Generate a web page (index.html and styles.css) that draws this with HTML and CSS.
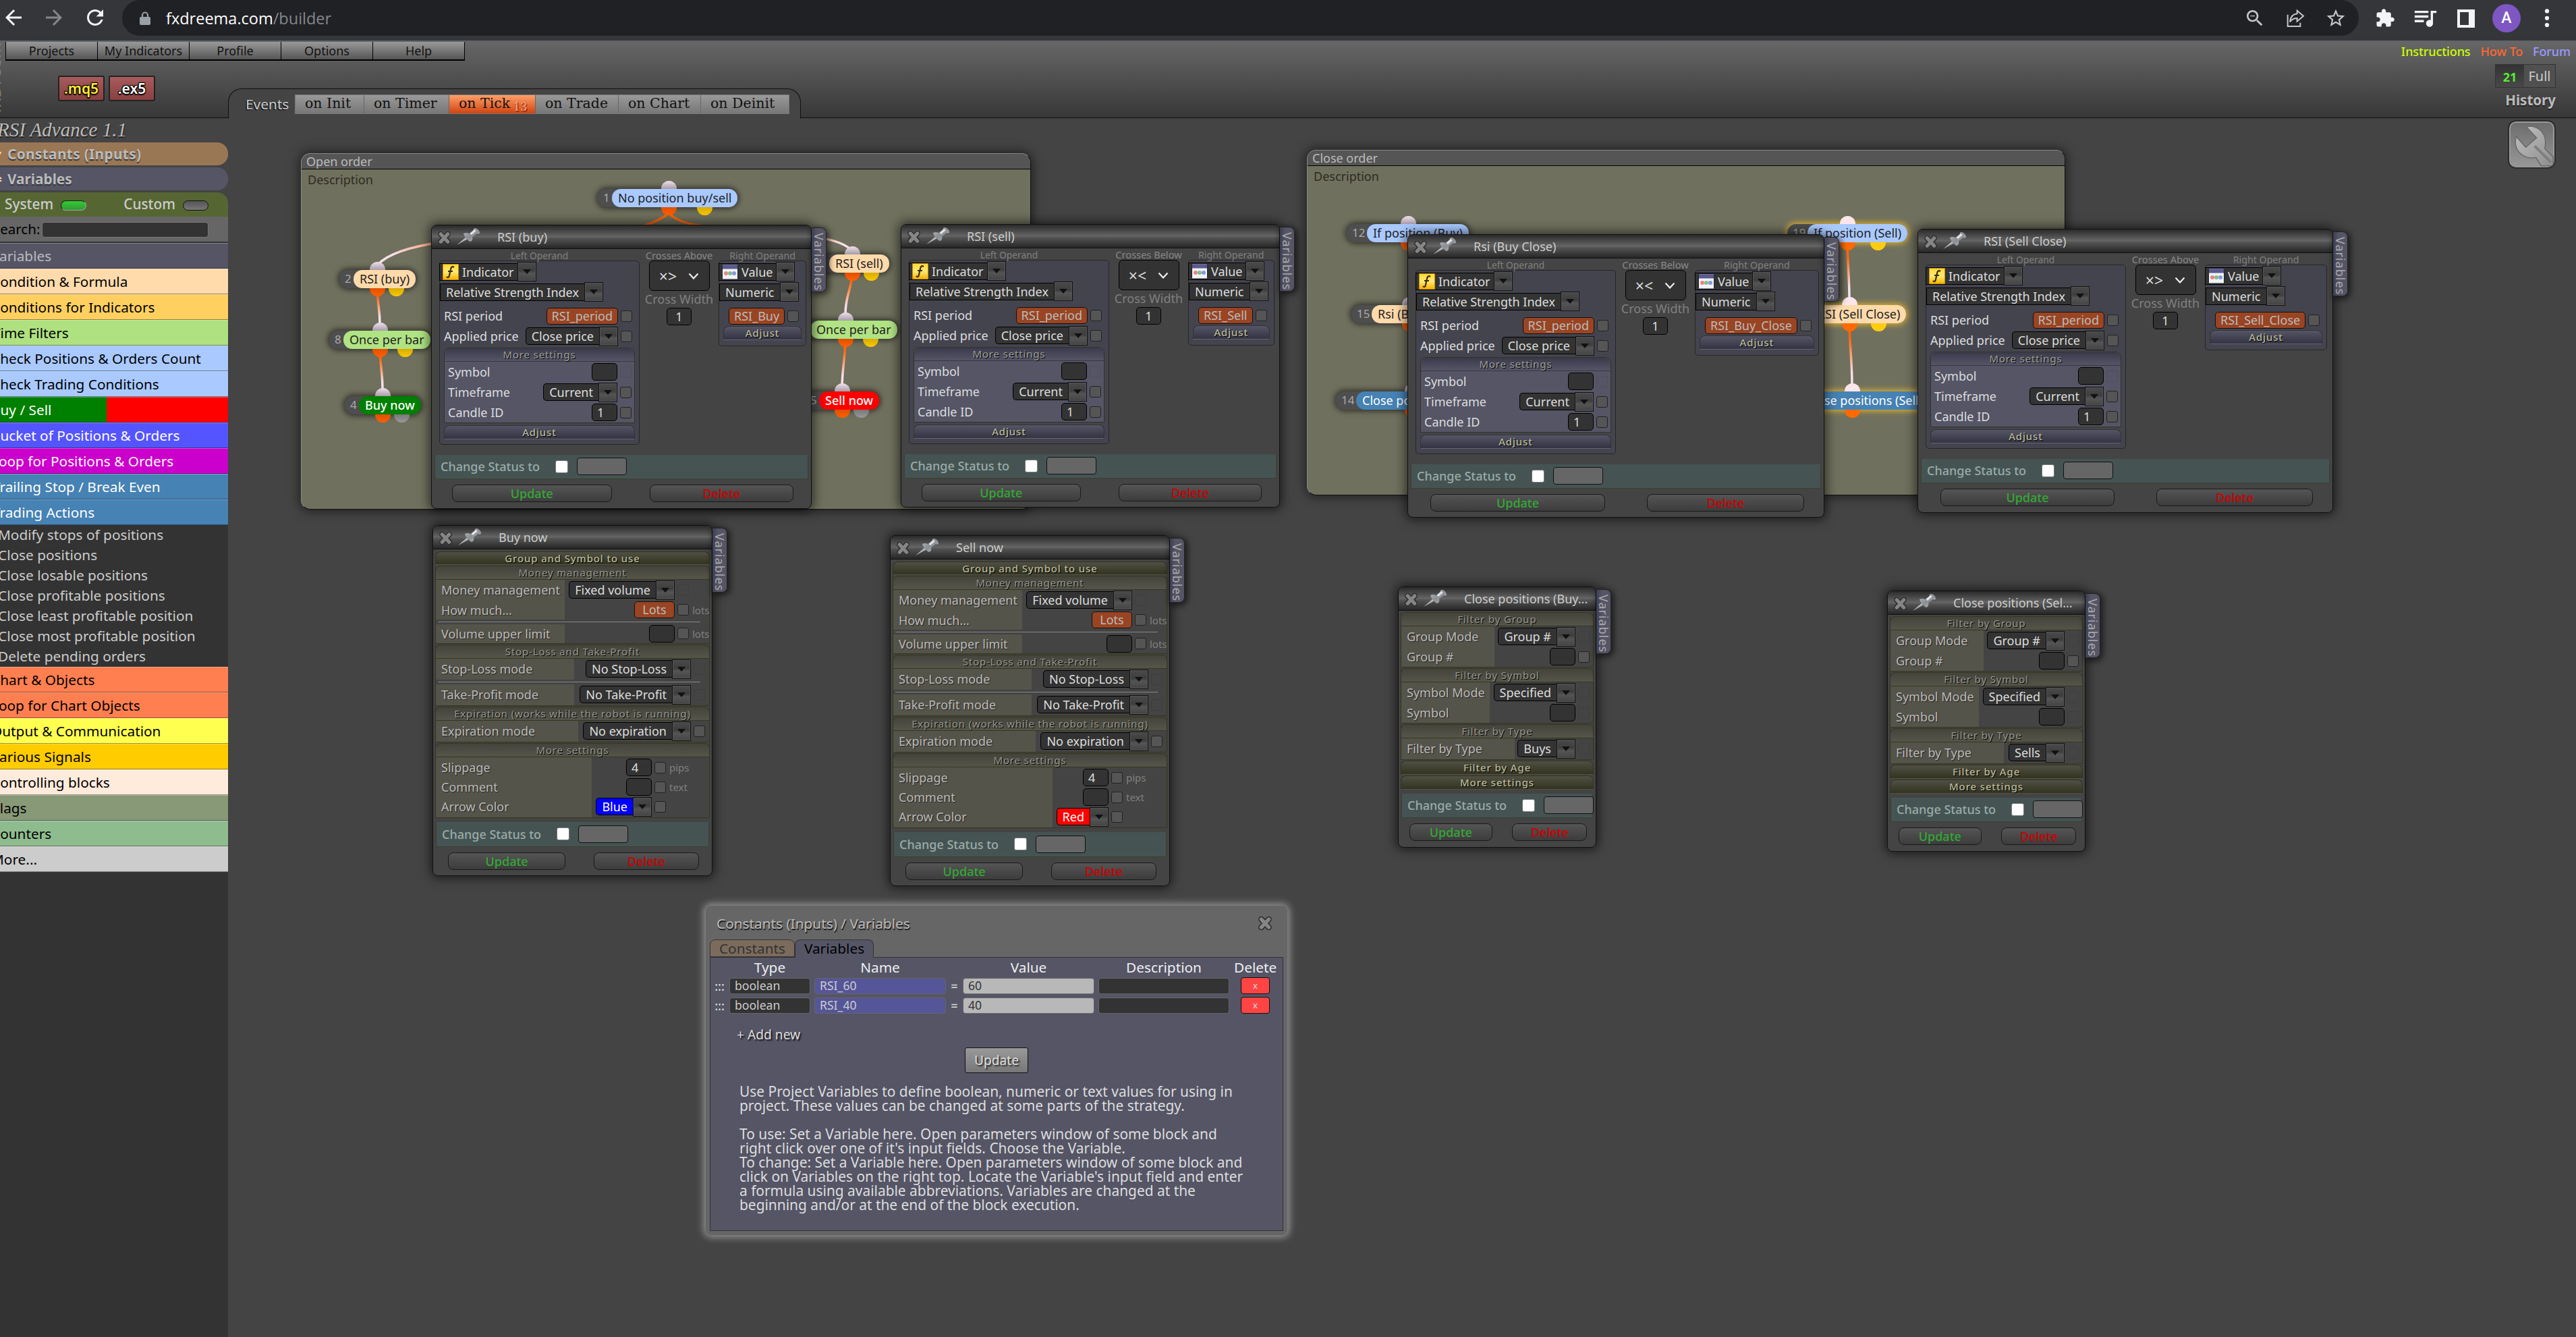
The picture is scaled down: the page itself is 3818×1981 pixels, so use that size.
FILE: index.html
```html
<!DOCTYPE html>
<html lang="en">
<head>
<meta charset="utf-8">
<title>fxDreema builder</title>
<link rel="stylesheet" href="styles.css">
</head>
<body>
<svg class="defs" width="0" height="0" aria-hidden="true">
  <defs>
    <linearGradient id="metal" x1="0" y1="0" x2="1" y2="1"><stop offset="0" stop-color="#b9bdc0"/><stop offset=".5" stop-color="#8b8f93"/><stop offset="1" stop-color="#b9bdc0"/></linearGradient>
    <linearGradient id="gold" x1="0" y1="0" x2="0" y2="1"><stop offset="0" stop-color="#ffd83a"/><stop offset=".5" stop-color="#ffe873"/><stop offset="1" stop-color="#f5b400"/></linearGradient>
    <linearGradient id="wire" x1="0" y1="0" x2="0" y2="1"><stop offset="0" stop-color="#ff6000"/><stop offset=".3" stop-color="#ff6a14"/><stop offset=".8" stop-color="#f6dfe6"/><stop offset="1" stop-color="#f4e4f0"/></linearGradient>
    <linearGradient id="steel" x1="0" y1="0" x2="1" y2="1"><stop offset="0" stop-color="#c0c0c0"/><stop offset="1" stop-color="#8e8e8e"/></linearGradient>
    <symbol id="close" viewBox="0 0 24 24"><path d="M6 5.500l12 13M18 5.500l-12 13" stroke="#2e2e2e" stroke-width="9.500" stroke-linecap="round"/><path d="M6 5.500l12 13M18 5.500l-12 13" stroke="#858585" stroke-width="6" stroke-linecap="round"/></symbol>
    <symbol id="pin" viewBox="0 0 36 28"><path d="M1 26L16 13l3 3z" fill="#b5b5b5"/><path d="M11 9c4-2 7-1 10 1l5-5c-1-2 0-4 2-4 4 0 7 4 7 7 0 2-3 2-4 1l-7 5c1 3 0 6-3 7-3-1-9-7-10-12z" fill="url(#metal)"/><path d="M20 9l7-6 3 2-7 6z" fill="#dfe3e6"/></symbol>
    <symbol id="func" viewBox="0 0 24 24"><rect width="24" height="24" rx="1" fill="#c98a00"/><rect x="1" y="1" width="22" height="22" fill="url(#gold)"/><path d="M17 5c-3-2-4.500 0-5 3l-2 9c-.5 3-2 4-4 2M8 11h7" fill="none" stroke="#3a2c00" stroke-width="2.200"/></symbol>
    <symbol id="value" viewBox="0 0 24 24"><rect x=".5" y="1" width="23" height="22" rx="1" fill="#f2f2f4" stroke="#223"/><rect x="1" y="1.500" width="22" height="6" fill="#5a5a90"/><circle cx="6" cy="14" r="3" fill="#e08888"/><circle cx="12" cy="14" r="3" fill="#7fbf90"/><circle cx="18" cy="14" r="3" fill="#8898d8"/></symbol>
    <symbol id="chev" viewBox="0 0 16 10"><path d="M1.500 1.500L8 8.500l6.500-7" fill="none" stroke="#eee" stroke-width="2.200"/></symbol>
  </defs>
</svg>

<nav class="browser">
  <svg class="ic back" viewBox="0 0 24 24"><path fill="#f1f3f4" d="M20 11H7.830l5.590-5.590L12 4l-8 8 8 8 1.410-1.410L7.830 13H20v-2z"/></svg>
  <svg class="ic fwd" viewBox="0 0 24 24"><path fill="#85878a" d="M4 11h12.170l-5.590-5.590L12 4l8 8-8 8-1.410-1.410L16.170 13H4v-2z"/></svg>
  <svg class="ic reload" viewBox="0 0 24 24"><path fill="#f1f3f4" d="M17.650 6.350C16.200 4.900 14.210 4 12 4c-4.420 0-7.990 3.580-7.990 8s3.570 8 7.990 8c3.730 0 6.840-2.550 7.730-6h-2.080c-.82 2.330-3.040 4-5.650 4-3.310 0-6-2.690-6-6s2.690-6 6-6c1.660 0 3.140.69 4.220 1.780L13 11h7V4l-2.350 2.350z"/></svg>
  <div class="omnibox">
    <svg class="lock" viewBox="0 0 16 20"><path d="M4 9V5.500a4 4 0 0 1 8 0V9" fill="none" stroke="#9aa0a6" stroke-width="2.200"/><rect x="0" y="8" width="16" height="12" rx="2" fill="#9aa0a6"/></svg>
    <span class="url">fxdreema.com<i>/builder</i></span>
    <div class="omni-icons">
      <svg viewBox="0 0 24 24"><path fill="#c4c7ca" d="M15.500 14h-.79l-.28-.27C15.410 12.590 16 11.110 16 9.500 16 5.910 13.090 3 9.500 3S3 5.910 3 9.500 5.910 16 9.500 16c1.610 0 3.090-.59 4.230-1.570l.27.28v.79l5 4.990L20.490 19l-4.990-5zm-6 0C7.010 14 5 11.990 5 9.500S7.010 5 9.500 5 14 7.010 14 9.500 11.990 14 9.500 14zM7 9h5v1H7z"/></svg>
      <svg viewBox="0 0 24 24"><path fill="none" stroke="#c4c7ca" stroke-width="1.500" d="M3.500 8v13h14v-4M14 3.500l7 6-7 6v-3.500c-4 0-6 1-8 4 .5-5 3-8.500 8-9z"/></svg>
      <svg viewBox="0 0 24 24"><path fill="#c4c7ca" d="M22 9.240l-7.190-.62L12 2 9.190 8.630 2 9.240l5.460 4.730L5.820 21 12 17.270 18.180 21l-1.630-7.030L22 9.240zM12 15.400l-3.760 2.270 1-4.280-3.320-2.880 4.380-.38L12 6.100l1.710 4.040 4.380.38-3.320 2.880 1 4.280L12 15.400z"/></svg>
    </div>
  </div>
  <div class="ext">
    <svg viewBox="0 0 24 24"><path fill="#f1f3f4" d="M20.500 11H19V7c0-1.100-.9-2-2-2h-4V3.500C13 2.120 11.880 1 10.500 1S8 2.120 8 3.500V5H4c-1.100 0-1.990.9-1.990 2v3.800H3.500c1.490 0 2.700 1.210 2.700 2.700s-1.210 2.700-2.700 2.700H2V20c0 1.100.9 2 2 2h3.800v-1.500c0-1.490 1.210-2.700 2.700-2.700 1.490 0 2.700 1.210 2.700 2.700V22H17c1.100 0 2-.9 2-2v-4h1.500c1.380 0 2.500-1.120 2.500-2.500S21.880 11 20.500 11z"/></svg>
    <svg class="wide" viewBox="2.500 2.500 20 20"><path fill="#f1f3f4" d="M15 6H3v2h12V6zm0 4H3v2h12v-2zM3 16h8v-2H3v2zM17 6v8.180c-.31-.11-.65-.18-1-.18-1.660 0-3 1.340-3 3s1.340 3 3 3 3-1.340 3-3V8h3V6h-5z"/></svg>
    <svg class="panel-ic" viewBox="0 0 26 27"><path fill="#f1f3f4" fill-rule="evenodd" d="M0 0h26v27H0zM4 4v19h13V4z"/></svg>
    <b class="avatar">A</b>
    <svg viewBox="0 0 24 24"><g fill="#f1f3f4"><circle cx="12" cy="3.500" r="2.500"/><circle cx="12" cy="11.800" r="2.500"/><circle cx="12" cy="20" r="2.500"/></g></svg>
  </div>
</nav>

<header class="top">
  <span class="brand">fxDreema</span>
  <div class="menu"><a>Projects</a><a>My Indicators</a><a>Profile</a><a>Options</a><a>Help</a></div>
  <div class="bar">
    <div class="export"><b class="mq">.mq5</b><b>.ex5</b></div>
    <div class="events">
      <span class="ev-title">Events</span>
      <div class="tabs"><a>on Init</a><a>on Timer</a><a class="on">on Tick<sub>13</sub></a><a>on Trade</a><a>on Chart</a><a>on Deinit</a></div>
    </div>
  </div>
  <div class="account">
    <div class="links"><a class="l1">Instructions</a><a class="l2">How To</a><a class="l3">Forum</a></div>
    <div class="plan"><b>21</b><span>Full</span></div>
    <b class="history">History</b>
  </div>
</header>

<div class="work">
<aside class="side">
  <h1>RSI Advance 1.1</h1>
  <div class="big const"><em>▾</em>Constants (Inputs)</div>
  <div class="big vars"><em>=</em>Variables</div>
  <div class="kinds"><span>System</span><i class="led on"></i><span class="k2">Custom</span><i class="led"></i></div>
  <div class="search"><span>Search:</span><i></i></div>
  <ul class="cats">
    <li class="c-var">Variables</li>
    <li class="c-cond">Condition &amp; Formula</li>
    <li class="c-ind">Conditions for Indicators</li>
    <li class="c-time">Time Filters</li>
    <li class="c-chk">Check Positions &amp; Orders Count</li>
    <li class="c-chk">Check Trading Conditions</li>
    <li class="c-bs w">Buy / Sell</li>
    <li class="c-buck w">Bucket of Positions &amp; Orders</li>
    <li class="c-loop w">Loop for Positions &amp; Orders</li>
    <li class="c-act w">Trailing Stop / Break Even</li>
    <li class="c-act w">Trading Actions</li>
  </ul>
  <ul class="items">
    <li>Modify stops of positions</li><li>Close positions</li><li>Close losable positions</li><li>Close profitable positions</li><li>Close least profitable position</li><li>Close most profitable position</li><li>Delete pending orders</li>
  </ul>
  <ul class="cats lower">
    <li class="c-chart">Chart &amp; Objects</li>
    <li class="c-chart">Loop for Chart Objects</li>
    <li class="c-out">Output &amp; Communication</li>
    <li class="c-sig">Various Signals</li>
    <li class="c-ctl">Controlling blocks</li>
    <li class="c-flag">Flags</li>
    <li class="c-cnt">Counters</li>
    <li class="c-more">More...</li>
  </ul>
</aside>

<main class="canvas">
  <div class="tool" style="--x:3717px;--y:178px"><svg viewBox="0 0 71 71"><path d="M27 8C38 4 57 12 57 33L56 42L69 55V69H50L42 56C24 60 5 46 11 23L26 40L43 25Z" fill="url(#steel)" stroke="#666" stroke-width="1.500"/><path d="M40 38L66 64" stroke="#7e7e7e" stroke-width="4"/></svg></div>

  <section class="group" style="--x:446px;--y:227px;--w:1082px;--h:528px"><h2>Open order</h2><p>Description</p></section>
  <section class="group" style="--x:1937px;--y:222px;--w:1124px;--h:512px"><h2>Close order</h2><p>Description</p></section>

  <svg class="wires" viewBox="338 175 3480 1806">
    <g fill="none" stroke="url(#wire)" stroke-width="3.500">
      <path d="M991 316C960 342 900 344 850 346C750 352 600 350 560 392"/>
      <path d="M991 316C1020 342 1060 332 1130 342C1180 348 1245 350 1263 372"/>
      <path d="M559 425C559 450 563 455 563 480"/>
      <path d="M563 514C563 540 567 550 567 578"/>
      <path d="M1263 401C1263 430 1253 435 1253 466"/>
      <path d="M1253 499C1253 530 1249 540 1248 571"/>
      <path d="M2738 356C2738 385 2741 410 2741 442"/>
      <path d="M2741 476C2741 510 2745 530 2745 571"/>
    </g>
  </svg>

  <div class="node blue" style="--x:886px;--y:280px;--in:105px;--b:158px"><i>1</i><span>No position buy/sell</span><u class="in"></u><u class="go"></u><u class="alt"></u></div>
  <div class="node peach" style="--x:503px;--y:400px;--in:56px;--b:84px"><i>2</i><span>RSI (buy)</span><u class="in"></u><u class="go"></u><u class="alt"></u></div>
  <div class="node lime" style="--x:488px;--y:490px;--in:75px;--b:112px"><i>8</i><span>Once per bar</span><u class="in"></u><u class="go"></u><u class="alt"></u></div>
  <div class="node buy" style="--x:511px;--y:587px;--in:56px;--b:84px"><i>4</i><span>Buy now</span><u class="in"></u><u class="go"></u><u class="alt off"></u></div>
  <div class="node peach" style="--x:1208px;--y:377px;--in:55px;--b:83px"><i>3</i><span>RSI (sell)</span><u class="in"></u><u class="go"></u><u class="alt"></u></div>
  <div class="node lime" style="--x:1180px;--y:475px;--in:73px;--b:110px"><i>9</i><span>Once per bar</span><u class="in"></u><u class="go"></u><u class="alt"></u></div>
  <div class="node sell" style="--x:1193px;--y:580px;--in:55px;--b:83px"><i>5</i><span>Sell now</span><u class="in"></u><u class="go"></u><u class="alt off"></u></div>
  <div class="node blue two" style="--x:1996px;--y:332px;--in:91px;--b:135px"><i>12</i><span>If position (Buy)</span><u class="in"></u><u class="go"></u><u class="alt"></u></div>
  <div class="node peach two" style="--x:2003px;--y:452px;--in:86px;--b:130px"><i>15</i><span>Rsi (Buy Close)</span><u class="in"></u><u class="go"></u><u class="alt"></u></div>
  <div class="node act two" style="--x:1980px;--y:580px;--in:113px;--b:160px"><i>14</i><span>Close positions (Buy)</span><u class="in"></u><u class="go"></u></div>
  <div class="node blue two lit" style="--x:2649px;--y:332px;--in:89px;--b:134px"><i>19</i><span>If position (Sell)</span><u class="in"></u><u class="go"></u><u class="alt"></u></div>
  <div class="node peach two lit" style="--x:2655px;--y:452px;--in:86px;--b:129px"><i>20</i><span>RSI (Sell Close)</span><u class="in"></u><u class="go"></u><u class="alt"></u></div>
  <div class="node act two lit" style="--x:2638px;--y:580px;--in:107px;--b:150px"><i>21</i><span>Close positions (Sell)</span><u class="in"></u><u class="go"></u></div>

  <!-- RSI (buy) -->
  <section class="win rsi" style="--x:639px;--y:333px;--w:564px;--h:421px">
    <span class="vtab">Variables</span>
    <header><svg class="x"><use href="#close"/></svg><svg class="p"><use href="#pin"/></svg>RSI (buy)</header>
    <div class="ops">
      <div class="left"><h3>Left Operand</h3><div class="box">
        <div class="r1"><span class="sel sq"><b><svg><use href="#func"/></svg>Indicator</b><i></i></span></div>
        <div class="r2"><span class="sel sq"><b>Relative Strength Index</b><i></i></span></div>
        <div class="row gap"><label>RSI period</label><span class="chip">RSI_period</span><i class="cb"></i></div>
        <div class="row"><label>Applied price</label><span class="sel"><b>Close price</b><i></i></span><i class="cb"></i></div>
        <div class="more"><h4>More settings</h4>
          <div class="row"><label>Symbol</label><span class="inp"></span><i class="cb dim"></i></div>
          <div class="row"><label>Timeframe</label><span class="sel"><b>Current</b><i></i></span><i class="cb"></i></div>
          <div class="row"><label>Candle ID</label><span class="inp">1</span><i class="cb"></i></div></div>
        <h4 class="adj">Adjust</h4></div></div>
      <div class="mid"><h3>Crosses Above</h3><span class="cross">×&gt;<svg><use href="#chev"/></svg></span><em>Cross Width</em><span class="inp">1</span></div>
      <div class="right"><h3>Right Operand</h3><div class="box">
        <div class="r1"><span class="sel sq"><b><svg><use href="#value"/></svg>Value</b><i></i></span></div>
        <div class="r2"><span class="sel sq"><b>Numeric</b><i></i></span></div>
        <div class="row gap"><span class="chip">RSI_Buy</span><i class="cb"></i></div>
        <h4 class="adj">Adjust</h4></div></div>
    </div>
    <div class="status">Change Status to<i></i><u></u></div>
    <footer><a class="up">Update</a><a class="del">Delete</a></footer>
  </section>

  <!-- RSI (sell) -->
  <section class="win rsi" style="--x:1335px;--y:332px;--w:562px;--h:420px">
    <span class="vtab">Variables</span>
    <header><svg class="x"><use href="#close"/></svg><svg class="p"><use href="#pin"/></svg>RSI (sell)</header>
    <div class="ops">
      <div class="left"><h3>Left Operand</h3><div class="box">
        <div class="r1"><span class="sel sq"><b><svg><use href="#func"/></svg>Indicator</b><i></i></span></div>
        <div class="r2"><span class="sel sq"><b>Relative Strength Index</b><i></i></span></div>
        <div class="row gap"><label>RSI period</label><span class="chip">RSI_period</span><i class="cb"></i></div>
        <div class="row"><label>Applied price</label><span class="sel"><b>Close price</b><i></i></span><i class="cb"></i></div>
        <div class="more"><h4>More settings</h4>
          <div class="row"><label>Symbol</label><span class="inp"></span><i class="cb dim"></i></div>
          <div class="row"><label>Timeframe</label><span class="sel"><b>Current</b><i></i></span><i class="cb"></i></div>
          <div class="row"><label>Candle ID</label><span class="inp">1</span><i class="cb"></i></div></div>
        <h4 class="adj">Adjust</h4></div></div>
      <div class="mid"><h3>Crosses Below</h3><span class="cross">×&lt;<svg><use href="#chev"/></svg></span><em>Cross Width</em><span class="inp">1</span></div>
      <div class="right"><h3>Right Operand</h3><div class="box">
        <div class="r1"><span class="sel sq"><b><svg><use href="#value"/></svg>Value</b><i></i></span></div>
        <div class="r2"><span class="sel sq"><b>Numeric</b><i></i></span></div>
        <div class="row gap"><span class="chip">RSI_Sell</span><i class="cb"></i></div>
        <h4 class="adj">Adjust</h4></div></div>
    </div>
    <div class="status">Change Status to<i></i><u></u></div>
    <footer><a class="up">Update</a><a class="del">Delete</a></footer>
  </section>

  <!-- Rsi (Buy Close) -->
  <section class="win rsi" style="--x:2086px;--y:347px;--w:618px;--h:420px">
    <span class="vtab">Variables</span>
    <header><svg class="x"><use href="#close"/></svg><svg class="p"><use href="#pin"/></svg>Rsi (Buy Close)</header>
    <div class="ops">
      <div class="left"><h3>Left Operand</h3><div class="box">
        <div class="r1"><span class="sel sq"><b><svg><use href="#func"/></svg>Indicator</b><i></i></span></div>
        <div class="r2"><span class="sel sq"><b>Relative Strength Index</b><i></i></span></div>
        <div class="row gap"><label>RSI period</label><span class="chip">RSI_period</span><i class="cb"></i></div>
        <div class="row"><label>Applied price</label><span class="sel"><b>Close price</b><i></i></span><i class="cb"></i></div>
        <div class="more"><h4>More settings</h4>
          <div class="row"><label>Symbol</label><span class="inp"></span><i class="cb dim"></i></div>
          <div class="row"><label>Timeframe</label><span class="sel"><b>Current</b><i></i></span><i class="cb"></i></div>
          <div class="row"><label>Candle ID</label><span class="inp">1</span><i class="cb"></i></div></div>
        <h4 class="adj">Adjust</h4></div></div>
      <div class="mid"><h3>Crosses Below</h3><span class="cross">×&lt;<svg><use href="#chev"/></svg></span><em>Cross Width</em><span class="inp">1</span></div>
      <div class="right"><h3>Right Operand</h3><div class="box">
        <div class="r1"><span class="sel sq"><b><svg><use href="#value"/></svg>Value</b><i></i></span></div>
        <div class="r2"><span class="sel sq"><b>Numeric</b><i></i></span></div>
        <div class="row gap"><span class="chip">RSI_Buy_Close</span><i class="cb"></i></div>
        <h4 class="adj">Adjust</h4></div></div>
    </div>
    <div class="status">Change Status to<i></i><u></u></div>
    <footer><a class="up">Update</a><a class="del">Delete</a></footer>
  </section>

  <!-- RSI (Sell Close) -->
  <section class="win rsi" style="--x:2842px;--y:339px;--w:616px;--h:421px">
    <span class="vtab">Variables</span>
    <header><svg class="x"><use href="#close"/></svg><svg class="p"><use href="#pin"/></svg>RSI (Sell Close)</header>
    <div class="ops">
      <div class="left"><h3>Left Operand</h3><div class="box">
        <div class="r1"><span class="sel sq"><b><svg><use href="#func"/></svg>Indicator</b><i></i></span></div>
        <div class="r2"><span class="sel sq"><b>Relative Strength Index</b><i></i></span></div>
        <div class="row gap"><label>RSI period</label><span class="chip">RSI_period</span><i class="cb"></i></div>
        <div class="row"><label>Applied price</label><span class="sel"><b>Close price</b><i></i></span><i class="cb"></i></div>
        <div class="more"><h4>More settings</h4>
          <div class="row"><label>Symbol</label><span class="inp"></span><i class="cb dim"></i></div>
          <div class="row"><label>Timeframe</label><span class="sel"><b>Current</b><i></i></span><i class="cb"></i></div>
          <div class="row"><label>Candle ID</label><span class="inp">1</span><i class="cb"></i></div></div>
        <h4 class="adj">Adjust</h4></div></div>
      <div class="mid"><h3>Crosses Above</h3><span class="cross">×&gt;<svg><use href="#chev"/></svg></span><em>Cross Width</em><span class="inp">1</span></div>
      <div class="right"><h3>Right Operand</h3><div class="box">
        <div class="r1"><span class="sel sq"><b><svg><use href="#value"/></svg>Value</b><i></i></span></div>
        <div class="r2"><span class="sel sq"><b>Numeric</b><i></i></span></div>
        <div class="row gap"><span class="chip">RSI_Sell_Close</span><i class="cb"></i></div>
        <h4 class="adj">Adjust</h4></div></div>
    </div>
    <div class="status">Change Status to<i></i><u></u></div>
    <footer><a class="up">Update</a><a class="del">Delete</a></footer>
  </section>

  <!-- Buy now -->
  <section class="win" style="--x:641px;--y:778px;--w:415px;--h:520px">
    <span class="vtab">Variables</span>
    <header><svg class="x"><use href="#close"/></svg><svg class="p"><use href="#pin"/></svg>Buy now</header>
    <div class="params">
      <h4 class="hot">Group and Symbol to use</h4>
      <div class="sec" style="--l:191px;--u:30px"><h4>Money management</h4>
        <div class="line"><label>Money management</label><span class="sel"><b>Fixed volume</b><i></i></span><i class="cb dim"></i><small></small></div>
        <div class="line h28"><label>How much...</label><span class="chip lots">Lots</span><i class="cb"></i><small>lots</small></div>
        <hr>
        <div class="line h28"><label>Volume upper limit</label><span class="inp"></span><i class="cb"></i><small>lots</small></div></div>
      <div class="sec" style="--l:205px;--u:6px"><h4>Stop-Loss and Take-Profit</h4>
        <div class="line"><label>Stop-Loss mode</label><span class="sel"><b>No Stop-Loss</b><i></i></span><i class="cb dim"></i><small></small></div>
        <hr>
        <div class="line"><label>Take-Profit mode</label><span class="sel"><b>No Take-Profit</b><i></i></span><i class="cb dim"></i><small></small></div></div>
      <div class="sec" style="--l:211px;--u:6px"><h4>Expiration (works while the robot is running)</h4>
        <div class="line"><label>Expiration mode</label><span class="sel"><b>No expiration</b><i></i></span><i class="cb"></i><small></small></div></div>
      <div class="sec" style="--l:231px;--u:64px"><h4>More settings</h4>
        <div class="line"><label>Slippage</label><span class="inp">4</span><i class="cb"></i><small>pips</small></div>
        <div class="line h27"><label>Comment</label><span class="inp"></span><i class="cb"></i><small>text</small></div>
        <div class="line"><label>Arrow Color</label><span class="sel cb-blue"><b>Blue</b><i></i></span><i class="cb"></i><small></small></div></div>
    </div>
    <div class="status">Change Status to<i></i><u></u></div>
    <footer><a class="up">Update</a><a class="del">Delete</a></footer>
  </section>

  <!-- Sell now -->
  <section class="win" style="--x:1319px;--y:793px;--w:415px;--h:520px">
    <span class="vtab">Variables</span>
    <header><svg class="x"><use href="#close"/></svg><svg class="p"><use href="#pin"/></svg>Sell now</header>
    <div class="params">
      <h4 class="hot">Group and Symbol to use</h4>
      <div class="sec" style="--l:191px;--u:30px"><h4>Money management</h4>
        <div class="line"><label>Money management</label><span class="sel"><b>Fixed volume</b><i></i></span><i class="cb dim"></i><small></small></div>
        <div class="line h28"><label>How much...</label><span class="chip lots">Lots</span><i class="cb"></i><small>lots</small></div>
        <hr>
        <div class="line h28"><label>Volume upper limit</label><span class="inp"></span><i class="cb"></i><small>lots</small></div></div>
      <div class="sec" style="--l:205px;--u:6px"><h4>Stop-Loss and Take-Profit</h4>
        <div class="line"><label>Stop-Loss mode</label><span class="sel"><b>No Stop-Loss</b><i></i></span><i class="cb dim"></i><small></small></div>
        <hr>
        <div class="line"><label>Take-Profit mode</label><span class="sel"><b>No Take-Profit</b><i></i></span><i class="cb dim"></i><small></small></div></div>
      <div class="sec" style="--l:211px;--u:6px"><h4>Expiration (works while the robot is running)</h4>
        <div class="line"><label>Expiration mode</label><span class="sel"><b>No expiration</b><i></i></span><i class="cb"></i><small></small></div></div>
      <div class="sec" style="--l:236px;--u:65px"><h4>More settings</h4>
        <div class="line"><label>Slippage</label><span class="inp">4</span><i class="cb"></i><small>pips</small></div>
        <div class="line h27"><label>Comment</label><span class="inp"></span><i class="cb"></i><small>text</small></div>
        <div class="line"><label>Arrow Color</label><span class="sel cb-red"><b>Red</b><i></i></span><i class="cb"></i><small></small></div></div>
    </div>
    <div class="status">Change Status to<i></i><u></u></div>
    <footer><a class="up">Update</a><a class="del">Delete</a></footer>
  </section>

  <!-- Close positions (Buy) -->
  <section class="win" style="--x:2072px;--y:869px;--w:294px;--h:387px">
    <span class="vtab">Variables</span>
    <header><svg class="x"><use href="#close"/></svg><svg class="p"><use href="#pin"/></svg>Close positions (Buy...</header>
    <div class="params tight">
      <div class="sec" style="--l:138px;--u:5px"><h4>Filter by Group</h4>
        <div class="line"><label>Group Mode</label><span class="sel"><b>Group #</b><i></i></span><i class="cb dim"></i><small></small></div>
        <div class="line h29"><label>Group #</label><span class="inp"></span><i class="cb"></i><small></small></div></div>
      <div class="sec" style="--l:131px;--u:5px"><h4>Filter by Symbol</h4>
        <div class="line"><label>Symbol Mode</label><span class="sel"><b>Specified</b><i></i></span><i class="cb dim"></i><small></small></div>
        <div class="line h29"><label>Symbol</label><span class="inp"></span><i class="cb dim"></i><small></small></div></div>
      <div class="sec" style="--l:168px;--u:5px"><h4>Filter by Type</h4>
        <div class="line"><label>Filter by Type</label><span class="sel"><b>Buys</b><i></i></span><i class="cb dim"></i><small></small></div></div>
      <h4 class="hot">Filter by Age</h4>
      <h4 class="hot">More settings</h4>
    </div>
    <div class="status">Change Status to<i></i><u></u></div>
    <footer><a class="up">Update</a><a class="del">Delete</a></footer>
  </section>

  <!-- Close positions (Sell) -->
  <section class="win" style="--x:2797px;--y:875px;--w:294px;--h:387px">
    <span class="vtab">Variables</span>
    <header><svg class="x"><use href="#close"/></svg><svg class="p"><use href="#pin"/></svg>Close positions (Sel...</header>
    <div class="params tight">
      <div class="sec" style="--l:138px;--u:5px"><h4>Filter by Group</h4>
        <div class="line"><label>Group Mode</label><span class="sel"><b>Group #</b><i></i></span><i class="cb dim"></i><small></small></div>
        <div class="line h29"><label>Group #</label><span class="inp"></span><i class="cb"></i><small></small></div></div>
      <div class="sec" style="--l:131px;--u:5px"><h4>Filter by Symbol</h4>
        <div class="line"><label>Symbol Mode</label><span class="sel"><b>Specified</b><i></i></span><i class="cb dim"></i><small></small></div>
        <div class="line h29"><label>Symbol</label><span class="inp"></span><i class="cb dim"></i><small></small></div></div>
      <div class="sec" style="--l:168px;--u:5px"><h4>Filter by Type</h4>
        <div class="line"><label>Filter by Type</label><span class="sel"><b>Sells</b><i></i></span><i class="cb dim"></i><small></small></div></div>
      <h4 class="hot">Filter by Age</h4>
      <h4 class="hot">More settings</h4>
    </div>
    <div class="status">Change Status to<i></i><u></u></div>
    <footer><a class="up">Update</a><a class="del">Delete</a></footer>
  </section>

  <!-- Constants / Variables dialog -->
  <section class="dialog" style="--x:1046px;--y:1342px">
    <header><span>Constants (Inputs) / Variables</span><svg><use href="#close"/></svg></header>
    <div class="dtabs"><a>Constants</a><a class="on">Variables</a></div>
    <div class="dbody">
      <div class="grid head"><span></span><span>Type</span><span>Name</span><span></span><span>Value</span><span>Description</span><span>Delete</span></div>
      <div class="grid"><em>:::</em><i>boolean</i><i class="nm">RSI_60</i><em>=</em><i class="vl">60</i><i></i><a>x</a></div>
      <div class="grid"><em>:::</em><i>boolean</i><i class="nm">RSI_40</i><em>=</em><i class="vl">40</i><i></i><a>x</a></div>
      <div class="add">+ Add new</div>
      <a class="save">Update</a>
      <p>Use Project Variables to define boolean, numeric or text values for using in<br>project. These values can be changed at some parts of the strategy.<br><br>To use: Set a Variable here. Open parameters window of some block and<br>right click over one of it's input fields. Choose the Variable.<br>To change: Set a Variable here. Open parameters window of some block and<br>click on Variables on the right top. Locate the Variable's input field and enter<br>a formula using available abbreviations. Variables are changed at the<br>beginning and/or at the end of the block execution.</p>
    </div>
  </section>
</main>
</div>
</body>
</html>
```
FILE: styles.css
```css
* { box-sizing: border-box; }
body { margin: 0; width: 3818px; height: 1981px; overflow: hidden; background: #444; color: #ddd; font: 18px "Noto Sans", sans-serif; }
h1, h2, h3, h4, p, ul { margin: 0; padding: 0; font-weight: normal; list-style: none; }
i, em { font-style: normal; }
u { text-decoration: none; }
b { font-weight: normal; }
.defs { position: absolute; }

/* browser toolbar */
.browser { display: flex; height: 60px; background: #35363a; align-items: flex-start; }
.browser .ic { width: 36px; height: 36px; margin-top: 8px; }
.browser .back { margin-left: 2px; }
.browser .fwd { margin-left: 24px; }
.browser .reload { margin-left: 24px; width: 38px; }
.omnibox { margin-left: 21px; width: 3315px; height: 53px; border-radius: 27px; background: #202124; display: flex; align-items: center; padding-left: 26px; }
.lock { width: 16px; height: 20px; }
.url { flex: 1; margin-left: 23px; color: #fff; font: 23.500px "Open Sans", sans-serif; }
.url i { color: #85888c; }
.omni-icons { display: flex; gap: 28px; padding-right: 18px; }
.omni-icons svg { width: 32px; height: 32px; }
.ext { display: flex; align-items: center; height: 54px; padding-left: 24px; gap: 28px; }
.ext svg { width: 30px; height: 30px; }
.ext .wide { width: 34px; height: 34px; }
.ext .panel-ic { width: 26px; height: 27px; margin-left: 2px; }
.avatar { width: 42px; height: 42px; margin: 0 -4px 0 -2px; border-radius: 50%; background: #7e57c2; color: #fff; font: 500 23px/42px Roboto, sans-serif; text-align: center; }

/* application header */
.top { position: relative; height: 115px; border-top: 2px solid #606468; border-bottom: 1px solid #111; background: linear-gradient(#666, #383838); }
.brand { position: absolute; left: -22px; top: 2px; height: 104px; overflow: hidden; writing-mode: vertical-rl; transform: rotate(180deg); font-size: 26px; line-height: 26px; color: #888; }
.menu { display: flex; width: 681px; height: 28px; margin-left: 8px; border: 1px solid #000; border-top: 0; border-bottom-width: 2px; background: linear-gradient(#999, #555); }
.menu a { flex: 1; text-align: center; line-height: 27px; color: #111; border-left: 1px solid #000; }
.menu a:first-child { border-left: 0; }
.bar { display: flex; align-items: flex-end; height: 85px; }
.export { display: flex; gap: 6px; width: 338px; padding: 0 0 25px 86px; }
.export b { width: 69px; height: 38px; border: 2px solid #222; border-radius: 3px; background: linear-gradient(#a65c5c, #8a4040); color: #fff; font: 600 21px/34px "Noto Sans", sans-serif; text-align: center; text-shadow: 1px 1px 1px #000, -1px -1px 1px #000, 1px -1px 1px #000, -1px 1px 1px #000, 0 2px 2px #000; }
.export .mq { color: #fe3; }
.events { display: flex; align-items: center; width: 849px; height: 45px; margin-bottom: -1px; padding-left: 25px; border: 1px solid #111; border-bottom: 0; border-radius: 20px 20px 0 0; background: #444; }
.ev-title { width: 73px; font-size: 20.800px; color: #ccc; text-shadow: -1px 1px 1px #000; }
.tabs { display: grid; grid-template-columns: 102px 126px 128px 123px 122px 130px; height: 29px; border: 1px solid #777; }
.tabs a { padding-left: 14px; font: 20.500px/25px "DejaVu Serif", serif; color: #111; background: linear-gradient(#999, #777); border-right: 1px solid #666; white-space: nowrap; }
.tabs a:last-child { border-right: 0; }
.tabs .on { position: relative; background: linear-gradient(#ff9f69, #d04410); }
.tabs sub { position: absolute; left: 95px; top: 8px; font: 16px/20px "DejaVu Serif", serif; color: #f4b48c; text-shadow: 1px 1px 1px #600; }
.account { position: absolute; right: 8px; top: 0; display: flex; flex-direction: column; align-items: flex-end; }
.links { display: flex; gap: 15px; font-size: 18px; font-weight: 500; letter-spacing: -.1px; height: 33px; line-height: 28px; }
.l1 { color: #cf0; } .l2 { color: #f63; } .l3 { color: #99f; }
.plan { display: flex; width: 90px; height: 35px; margin-right: 22px; border: 1px solid #333; line-height: 34px; font-size: 20px; }
.plan b { width: 42px; text-align: center; background: linear-gradient(#333, #484848); color: #5e3; font: bold 18px/36px "Noto Sans", sans-serif; }
.plan span { flex: 1; text-align: center; color: #ccc; background: #505050; }
.history { margin: 4px 22px 0 0; font: bold 20.500px/28px "Noto Sans", sans-serif; color: #bbb; text-shadow: 0 2px 1px #222; }

/* sidebar */
.work { display: flex; }
.side { width: 338px; height: 1806px; overflow: hidden; font-size: 20.800px; white-space: nowrap; background: linear-gradient(#444 170px, #333 170px); }
.side h1 { height: 36px; margin-left: -4px; font: italic 29px/34px "Liberation Serif", serif; color: #bbb; text-shadow: 1px 2px 1px #222; }
.big { display: flex; height: 34px; margin-bottom: 3px; border-radius: 0 16px 16px 0; font-weight: bold; line-height: 34px; color: #bbb; text-shadow: 0 2px 1px #333; }
.big em { width: 22px; margin-left: -11px; color: #fdb; text-shadow: none; text-align: center; overflow: hidden; text-indent: -6px; }
.const { background: #9a7754; letter-spacing: .35px; }
.vars { background: #556; }
.kinds { display: flex; align-items: center; height: 36px; padding: 0 29px 2px 7px; border-radius: 0 16px 0 0; background: #563; color: #ccc; font-weight: 500; }
.led { width: 38px; height: 15px; margin: 4px 0 0 11px; border: 1px solid #111; border-radius: 8px; background: linear-gradient(#555, #777); }
.led.on { background: linear-gradient(#3c3, #393); border-color: #121 #9a9 #9a9 #121; }
.k2 { margin-left: auto; }
.search { display: flex; align-items: center; height: 39px; padding-bottom: 1px; border-bottom: 2px solid #333; background: #666; color: #000; }
.search span { width: 73px; margin-left: -11px; font-size: 20.500px; }
.search i { width: 247px; height: 23px; margin-top: 2px; border: 1px solid #777; border-radius: 4px; background: #333; }
.cats li { height: 38px; text-indent: -13px; line-height: 36px; color: #000; border-top: 1px solid rgba(255,255,255,.3); border-bottom: 1px solid rgba(0,0,0,.4); }
.cats .w { color: #fff; }
.items { height: 210px; background: #333; color: #ccc; }
.items li { height: 30px; line-height: 28px; text-indent: -3px; }
.cats .c-var { background: #556; color: #bbb; }
.c-cond { background: #ffdaab; } .c-ind { background: #ffd060; } .c-time { background: #afe180; } .c-chk { background: #a9c9ff; }
.c-bs { background: linear-gradient(90deg, #008000 158px, #f00 158px); }
.c-buck { background: #55f; } .c-loop { background: #c0c; } .c-act { background: #4682b4; }
.c-chart { background: #ff7f50; } .c-out { background: #ffff50; } .c-sig { background: #fc0; } .c-ctl { background: #ffebdc; }
.c-flag { background: #897; } .c-cnt { background: #8fbc8f; } .c-more { background: #ccc; }
.cats .c-flag, .cats .c-time, .cats .c-act { text-indent: -11px; }

/* canvas */
.canvas { position: relative; width: 3480px; height: 1806px; overflow: hidden; }
.canvas > div, .canvas > section { position: absolute; left: calc(var(--x) - 338px); top: calc(var(--y) - 175px); }
.wires { position: absolute; left: 0; top: 0; width: 3480px; height: 1806px; }
.tool { width: 71px; height: 72px; border: 2px solid #2c2c2c; border-radius: 12px; background: linear-gradient(#6c6c6c, #989898); overflow: hidden; box-shadow: inset 0 0 0 2px #999; }
.tool svg { display: block; width: 67px; height: 68px; }
.group { width: var(--w); height: var(--h); border: 1px solid #111; border-top-color: #888; border-left-color: #888; border-radius: 14px; background: #70705e; overflow: hidden; box-shadow: 0 0 16px 3px rgba(0,0,0,.5); }
.group h2 { height: 23px; padding-left: 7px; font-size: 18px; line-height: 22px; color: #bbb; background: #555; border-bottom: 1px solid #000; }
.group p { padding: 3px 9px; color: #2c2c22; }

.node { display: flex; height: 27px; border-radius: 13px; background: #4e4e4e; box-shadow: 0 0 8px 2px rgba(0,0,0,.6); line-height: 26px; white-space: nowrap; color: #222; }
.node > i { width: 21px; padding-left: 8px; font-size: 17px; line-height: 25px; color: #aaa; }
.node.two > i { width: 30px; }
.node > span { padding: 0 9px; border-radius: 13px; }
.blue > span { background: #a9c9ff; } .peach > span { background: #ffdaab; } .lime > span { background: #b0e383; }
.act > span { background: #4682b4; color: #fff; }
.buy > span { background: #008000; color: #fff; font-weight: 500; }
.sell > span { background: #f00; color: #fff; font-weight: 500; }
.node u { position: absolute; width: 23px; height: 12px; left: calc(var(--in) - 11.500px); }
.node .in { top: -12px; border-radius: 12px 12px 0 0; background: linear-gradient(#efe0ea, #a79ca8); }
.node .go { top: 27px; border-radius: 0 0 12px 12px; background: linear-gradient(#e05000, #ff6000); }
.node .alt { top: 27px; left: calc(var(--b) - 11.500px); border-radius: 0 0 12px 12px; background: linear-gradient(#d8ac00, #f8c800); }
.node .off { background: linear-gradient(#777, #999); }
.node.lit { box-shadow: 0 0 9px 2px #dcb030; }
.lit .in { background: #fbe6ea; } .lit .go { background: #ff6a00; } .lit .alt { background: #ffcd10; }

/* block windows */
.win { width: var(--w); height: var(--h); border: 1px solid #111; border-radius: 8px; background: #444; box-shadow: 0 0 16px 3px rgba(0,0,0,.6); white-space: nowrap; }
.win > header { display: flex; align-items: center; height: 34.500px; padding-left: 8px; border-bottom: 1px solid #111; border-radius: 7px 7px 0 0; color: #ccc; background: linear-gradient(#2a2a2a, #666 50%, #555 55%, #262626); }
.win header .x { width: 21px; height: 21px; margin-top: 3px; }
.win header .p { width: 36px; height: 28px; margin: 0 25px 0 7px; }
.vtab { position: absolute; left: calc(100% + 1px); top: 3px; width: 22px; height: 96px; padding-top: 7px; writing-mode: vertical-rl; line-height: 21px; letter-spacing: 1px; color: #aaa; background: linear-gradient(90deg, #3e3e52, #556 40%); border: 1px solid #222; border-left: 0; border-radius: 0 8px 8px 0; box-shadow: 2px 2px 10px 2px rgba(0,0,0,.6); }
.status { display: grid; grid-template-columns: 170px 32px 74px; align-items: center; height: 36.500px; margin: 0 4px; padding-left: 8px; border: 1px solid #3a4030; border-top: 0; background: #455453; color: #9aaba8; font-weight: 500; }
.status i { width: 19px; height: 19px; border: 1px solid #777; border-radius: 3px; background: #fff; }
.status u { width: 74px; height: 26px; border: 1px solid #111; border-radius: 4px; background: #666; }
.win footer { display: grid; grid-template-columns: calc(var(--w) * .42) calc(var(--w) * .377); margin-top: 8px; padding-left: calc(var(--w) * .053); column-gap: calc(var(--w) * .1); }
.win footer a { height: 26px; border: 1px solid #1a1a1a; border-radius: 8px; background: linear-gradient(#555, #3c3c3c); text-align: center; line-height: 24px; font-weight: 500; }
.up { color: #3a3; } .del { color: #c00; }

.sel { display: inline-flex; align-items: center; height: 29px; }
.sel > b { display: flex; align-items: center; height: 26px; padding: 0 8px; border: 1px solid #000; border-right: 0; border-radius: 5px 0 0 5px; background: #333; color: #ddd; }
.sel.sq > b { border-radius: 0; }
.sel b svg { width: 24px; height: 24px; margin: 0 5px 0 -4px; }
.r1 .sel b { padding-right: 5px; }
.sel > i { width: 28px; height: 29px; border: 1px solid #111; background: linear-gradient(#4a4a4a, #3e3e3e 45%, #555 60%, #444); box-shadow: inset 0 0 0 1px #555; }
.sel > i::after { content: ""; display: block; margin: 10px auto 0; width: 0; border: 6px solid transparent; border-top: 7px solid #111; border-bottom: 0; }
.cb-blue > b { background: #00f; color: #fff; } .cb-red > b { background: #f00; color: #fff; }
.cb { flex: none; width: 17px; height: 17px; margin-left: 4px; border: 1px solid #222; border-radius: 3px; background: #555; }
.cb.dim { background: transparent; border-color: rgba(0,0,0,.08); }
.chip { height: 25px; padding: 0 7px; border: 1px solid #111; border-radius: 5px; background: #942; color: #bbb; line-height: 23px; }
.inp { flex: none; width: 38px; height: 26px; padding-left: 7px; border: 1px solid #000; border-radius: 5px; background: #333; color: #ddd; line-height: 24px; }
h4 { height: 20px; border-radius: 8px 8px 0 0; text-align: center; font-size: 15px; line-height: 19px; letter-spacing: .85px; text-shadow: 1px 1px 0 #000; }

.ops { display: flex; height: 305px; padding-left: 11px; }
.ops h3 { height: 17.500px; text-align: center; font-size: 13.800px; line-height: 20px; color: #808080; }
.left { flex: none; width: 297px; }
.box { border: 1px solid #262626; border-radius: 5px; background: #44444f; }
.left .box { height: 273px; }
.r1 { height: 31px; display: flex; align-items: center; margin-left: -1px; }
.r2 { height: 29.500px; display: flex; align-items: center; }
.row { display: flex; align-items: center; height: 30px; padding: 0 10px 0 6px; }
.row.gap { margin-top: 6px; height: 29.500px; }
.row label { flex: 1; }
.more { margin: 2px 6px 0 6px; border: 1px solid #33331f; border-radius: 8px 8px 0 0; background: #556; }
.more h4 { background: linear-gradient(#3a3a4c, #556); border-bottom: 1px dotted #333; color: #a0a098; }
.more .row { padding: 0 4px 0 5px; }
.adj { margin: 3px 6px 0 6px; height: 21px; background: linear-gradient(#556, #334); border: 1px solid #333; border-bottom: 1px dotted #777; color: #bb9; font-weight: 500; }
.mid { flex: none; width: 103px; margin: 0 7px; display: flex; flex-direction: column; align-items: center; }
.mid h3 { font-size: 14.600px; line-height: 18px; color: #888; }
.cross { display: flex; align-items: center; justify-content: center; width: 90px; height: 45px; border: 1px solid #000; border-radius: 6px; background: #333; color: #ddd; font-size: 23px; line-height: 20px; }
.cross svg { width: 16px; height: 10px; margin-left: 17px; }
.mid em { color: #808080; line-height: 25px; }
.mid .inp { width: 37px; padding: 0; text-align: center; }
.right { flex: 1; margin-right: 11px; }
.right h3 { font-size: 14.200px; }
.right .box { height: 127px; }
.right .row { padding-left: 14px; }
.right .adj { margin: 0 6px; }

.params { padding: 3px 3px 0; height: 404.500px; }
.params.tight { padding-top: 2px; height: 271px; }
.hot { margin-bottom: 1px; border: 1px solid #33331f; border-bottom: 1px dotted #554; background: linear-gradient(#505044, #333320); color: #bb9; font-weight: 500; }
.sec { border: 1px solid #36361f; border-top: 0; margin-bottom: 1px; }
.sec h4 { margin: 0 -1px; height: 21px; border: 1px solid #36361f; background: linear-gradient(#44443c, #55554a); color: #98988c; }
.line { display: flex; align-items: center; height: 31px; background: linear-gradient(#54544a, #54544a) 0 0 / var(--l) 100% no-repeat; }
.line.h28 { height: 28px; } .line.h27 { height: 27px; } .line.h29 { height: 29px; }
.line label { flex: 1; padding-left: 8px; color: #bbb; line-height: 22px; text-shadow: 1px 1px 1px #222; }
.line small { flex: none; width: var(--u); padding-left: 5px; font-size: 15px; color: #808080; line-height: 20px; }
.line small:empty { padding: 0; }
.sec hr { height: 1px; margin: 3px 13px 3px 3px; border: 0; background: #888; }
.lots { width: 60px; text-align: center; }
.tight .hot { height: 21px; }

/* variables dialog */
.dialog { width: 862px; height: 488px; padding: 0 6px; border-radius: 8px; background: #666; box-shadow: 0 0 12px 3px rgba(255,255,255,.45); }
.dialog header { display: flex; justify-content: space-between; align-items: center; height: 50px; padding: 2px 16px 0 10px; font-size: 20.800px; color: #bbb; text-shadow: 1px 2px 1px #111; }
.dialog header svg { width: 22px; height: 22px; }
.dtabs { display: flex; height: 27px; margin-bottom: -1px; position: relative; font-size: 20.800px; }
.dtabs a { width: 126px; height: 26px; border: 1px solid #333; border-radius: 8px 8px 0 0; line-height: 25px; text-align: center; background: #7c6b5c; color: #333; }
.dtabs .on { width: 117px; height: 27px; border-bottom: 0; background: #556; color: #000; }
.dbody { height: 406px; border: 1px solid #333; background: #556; }
.grid { display: grid; grid-template-columns: 17px 120px 195px 13px 195px 194px 54px; column-gap: 6px; align-items: center; height: 29px; padding-left: 5px; white-space: nowrap; }
.grid > :nth-child(7) { margin-left: 11px; width: 43px; }
.head { height: 27px; font-size: 20.800px; color: #eee; text-align: center; }
.grid.head > :nth-child(7) { margin-left: 1px; width: 63px; }
.grid i { height: 24px; padding-left: 7px; border: 1px solid #666; border-radius: 4px; background: #333; font-size: 17.600px; line-height: 21px; color: #ccc; }
.grid .nm { background: #559; } .grid .vl { background: #b8b8b8; color: #333; }
.grid em { text-align: center; font-weight: 500; }
.grid a { height: 25px; border: 1px solid #111; border-radius: 4px; background: #f44; color: #ddd; font-size: 13px; line-height: 22px; text-align: center; }
.add { margin: 15px 0 0 39px; height: 28px; font-size: 19.200px; line-height: 28px; text-shadow: 2px 2px 2px #111; }
.save { display: block; width: 94px; height: 38px; margin: 5px auto 0; border: 1px solid #111; border-radius: 3px; background: linear-gradient(#999, #777); font-size: 19.200px; line-height: 36px; text-align: center; text-shadow: 2px 2px 2px #222; }
.dialog p { margin: 17px 0 0 43px; font-size: 20.900px; line-height: 21px; color: #ddd; white-space: nowrap; }
```
